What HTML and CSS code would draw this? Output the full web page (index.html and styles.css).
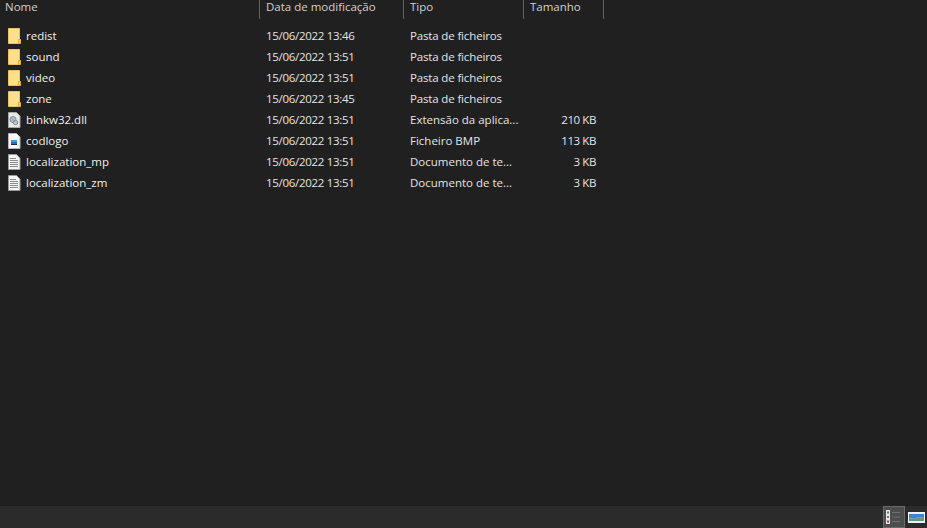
FILE: index.html
```html
<!DOCTYPE html>
<html lang="pt">
<head>
<meta charset="utf-8">
<title>Explorador</title>
<link rel="stylesheet" href="styles.css">
</head>
<body>
<div class="window">
  <div class="header">
    <div class="hcell c-name">Nome</div>
    <div class="hcell c-date">Data de modificação</div>
    <div class="hcell c-type">Tipo</div>
    <div class="hcell c-size">Tamanho</div>
  </div>
  <div class="list">
    <div class="row"><div class="c-name namecell"><svg class="ico" viewBox="0 0 14 16"><use href="#folder"/></svg><span>redist</span></div><div class="c-date cell">15/06/2022 13:46</div><div class="c-type cell tight">Pasta de ficheiros</div><div class="c-size cell"></div></div>
    <div class="row"><div class="c-name namecell"><svg class="ico" viewBox="0 0 14 16"><use href="#folder"/></svg><span>sound</span></div><div class="c-date cell">15/06/2022 13:51</div><div class="c-type cell tight">Pasta de ficheiros</div><div class="c-size cell"></div></div>
    <div class="row"><div class="c-name namecell"><svg class="ico" viewBox="0 0 14 16"><use href="#folder"/></svg><span>video</span></div><div class="c-date cell">15/06/2022 13:51</div><div class="c-type cell tight">Pasta de ficheiros</div><div class="c-size cell"></div></div>
    <div class="row"><div class="c-name namecell"><svg class="ico" viewBox="0 0 14 16"><use href="#folder"/></svg><span>zone</span></div><div class="c-date cell">15/06/2022 13:45</div><div class="c-type cell tight">Pasta de ficheiros</div><div class="c-size cell"></div></div>
    <div class="row"><div class="c-name namecell"><svg class="ico" viewBox="0 0 14 16"><use href="#dll"/></svg><span>binkw32.dll</span></div><div class="c-date cell">15/06/2022 13:51</div><div class="c-type cell">Extensão da aplica...</div><div class="c-size cell">210 KB</div></div>
    <div class="row"><div class="c-name namecell"><svg class="ico" viewBox="0 0 14 16"><use href="#bmp"/></svg><span>codlogo</span></div><div class="c-date cell">15/06/2022 13:51</div><div class="c-type cell">Ficheiro BMP</div><div class="c-size cell">113 KB</div></div>
    <div class="row"><div class="c-name namecell"><svg class="ico" viewBox="0 0 14 16"><use href="#txt"/></svg><span>localization_mp</span></div><div class="c-date cell">15/06/2022 13:51</div><div class="c-type cell">Documento de te...</div><div class="c-size cell">3 KB</div></div>
    <div class="row"><div class="c-name namecell"><svg class="ico" viewBox="0 0 14 16"><use href="#txt"/></svg><span>localization_zm</span></div><div class="c-date cell">15/06/2022 13:51</div><div class="c-type cell">Documento de te...</div><div class="c-size cell">3 KB</div></div>
  </div>
  <div class="status">
    <div class="viewbtn active">
      <svg width="16" height="16" viewBox="0 0 16 16"><rect x="0" y="1" width="4" height="14" fill="#e8e8e8"/><rect x="1" y="2.500" width="2" height="2" fill="#4f7f66"/><rect x="1" y="7" width="2" height="2" fill="#4f78b5"/><rect x="1" y="11.500" width="2" height="2" fill="#c03030"/><path d="M6 3.500h8M6 8h8M6 12.500h8" stroke="#6f6f6f" stroke-width="1"/></svg>
    </div>
    <div class="viewbtn">
      <svg width="17" height="11" viewBox="0 0 17 11"><rect width="17" height="11" fill="#f4f4f4"/><rect x="1" y="1" width="15" height="9" fill="#e4eff6"/><path d="M1 2h15v4l-5 -1 -5 2 -5 -1z" fill="#3f86c4"/><path d="M1 6l5 1 5 -2 5 1v3H1z" fill="#5f9a86"/></svg>
    </div>
  </div>
</div>
<svg class="defs" width="0" height="0">
  <defs>
    <g id="folder">
      <path d="M1.500 0.500h11v15h-11z" fill="#ffe08a" stroke="#eac262" stroke-width="1"/>
      <path d="M11.500 15.500v-4h2v4z" fill="#ffd566" stroke="#dcae48" stroke-width="1"/>
    </g>
    <g id="doc">
      <path d="M1.500 0.500h8l3.500 3.500v11.500H1.500z" fill="#f5f5f5" stroke="#9a9a9a"/>
    </g>
    <g id="dll">
      <path d="M1.500 0.500h8l3.500 3.500v11.500H1.500z" fill="#e9e9e9" stroke="#a8a8a8"/>
      <circle cx="6" cy="7.500" r="3" fill="#b9c3cc" stroke="#7f8a94"/>
      <circle cx="8.500" cy="10.500" r="2.200" fill="#c8d0d6" stroke="#7d8791"/>
      <path d="M4 5.500l5 5" stroke="#8ca0b0"/>
    </g>
    <g id="bmp">
      <path d="M1.500 0.500h8l3.500 3.500v11.500H1.500z" fill="#fafafa" stroke="#b5b5b5"/>
      <rect x="4" y="7" width="6" height="5" fill="#1f6fc4"/>
      <rect x="4" y="7" width="6" height="2" fill="#3d9ee0"/>
      <rect x="4" y="11" width="6" height="1" fill="#0c2f66"/>
    </g>
    <g id="txt">
      <use href="#doc"/>
      <path d="M3 4.500h6M3 6.500h8M3 8.500h8M3 10.500h8M3 12.500h8" stroke="#8a8a8a" stroke-width="1"/>
    </g>
  </defs>
</svg>
</body>
</html>
```
FILE: styles.css
```css
* { box-sizing: border-box; }
html, body { margin: 0; padding: 0; height: 100%; }
body {
  background: #202020;
  color: #e4e4e4;
  font-family: "Open Sans", "Noto Sans", "Liberation Sans", sans-serif;
  font-size: 11.5px;
  overflow: hidden;
}
.window { height: 528px; display: flex; flex-direction: column; }
.header { display: flex; height: 19px; flex: none; }
.hcell {
  height: 19px;
  padding-left: 6px;
  border-right: 1px solid #636363;
  color: #d0d0d0;
  line-height: 14px;
}
.hcell.c-name { padding-left: 5px; }
.c-name { width: 260px; flex: none; }
.c-date { width: 144px; flex: none; }
.c-type { width: 120px; flex: none; }
.c-size { width: 80px; flex: none; }
.list { flex: 1; padding-top: 6px; }
.row { display: flex; height: 21px; align-items: center; }
.cell { padding-left: 6px; white-space: nowrap; }
.row .c-date { letter-spacing: -0.3px; }
.row .tight { letter-spacing: -0.15px; }
.namecell { display: flex; align-items: center; padding-left: 7px; color: #f0f0f0; }
.ico { width: 14px; height: 16px; flex: none; margin-right: 5px; }
.row .c-size { text-align: right; padding-right: 8px; letter-spacing: -0.4px; }
.status {
  height: 22px;
  flex: none;
  background: #2b2b2b;
  display: flex;
  justify-content: flex-end;
}
.viewbtn {
  width: 22px;
  height: 22px;
  display: flex;
  align-items: center;
  justify-content: center;
}
.viewbtn.active { background: #4d4d4d; border: 1px solid #6a6a6a; }
.defs { position: absolute; }
```
